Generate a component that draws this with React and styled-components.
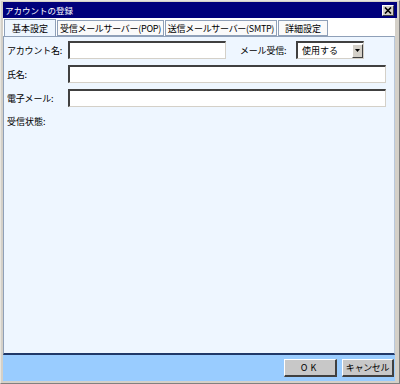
import React from 'react';
import styled, { createGlobalStyle } from 'styled-components';

const Global = createGlobalStyle`
  html, body {
    margin: 0;
    padding: 0;
    background: #d4d0c8;
  }
  * {
    box-sizing: border-box;
  }
`;

const Window = styled.div`
  width: 400px;
  height: 384px;
  display: flex;
  flex-direction: column;
  background: #d4d0c8;
  border-top: 1px solid #e8e6e0;
  border-left: 1px solid #e8e6e0;
  border-right: 1px solid #808080;
  border-bottom: 1px solid #808080;
  padding: 1px 4px 2px 2px;
  font-family: "Noto Sans CJK JP", "Liberation Sans", sans-serif;
  font-size: 9px;
  color: #000;
  white-space: nowrap;
`;

const TitleBar = styled.div`
  height: 16px;
  flex-shrink: 0;
  display: flex;
  align-items: center;
  justify-content: space-between;
  background: #00007b;
  color: #fff;
  padding: 0 3px 0 2px;
  margin-right: -2px;
  font-size: 8.5px;
`;

const CloseButton = styled.div`
  width: 12px;
  height: 11px;
  background: #d4d0c8;
  border-top: 1px solid #fff;
  border-left: 1px solid #fff;
  border-right: 1px solid #404040;
  border-bottom: 1px solid #404040;
  display: flex;
  align-items: center;
  justify-content: center;
`;

const Body = styled.div`
  flex: 1;
  display: flex;
  flex-direction: column;
  background: #fff;
  padding-top: 1px;
`;

const Tabs = styled.div`
  display: flex;
  align-items: flex-end;
  height: 17px;
  padding-left: 1px;
  background: #fff;
`;

const Tab = styled.div`
  width: ${({ w }) => w}px;
  height: ${({ active }) => (active ? '17px' : '16px')};
  margin-right: 1px;
  display: flex;
  align-items: center;
  justify-content: center;
  background: ${({ active }) => (active ? '#eef6ff' : '#fafafa')};
  border: 1px solid #8fa0b8;
  border-bottom: ${({ active }) => (active ? 'none' : '1px solid #8fa0b8')};
  font-size: 9px;
  letter-spacing: ${({ tight }) => (tight ? '-0.3px' : '0')};
`;

const Panel = styled.div`
  flex: 1;
  background: #eef6ff;
  border-left: 1px solid #8fa0b8;
  border-right: 1px solid #b8c8dc;
  border-bottom: 2px solid #203868;
  border-top: 1px solid #8fa0b8;
  padding: 4px 8px 0 3px;
  display: flex;
  flex-direction: column;
  gap: 6px;
`;

const Row = styled.div`
  display: flex;
  align-items: center;
  height: 18px;
`;

const Label = styled.div`
  width: ${({ w }) => w || 61}px;
  flex-shrink: 0;
  padding-left: ${({ pad }) => pad || 0}px;
  letter-spacing: -0.2px;
`;

const Input = styled.div`
  width: ${({ w }) => (w ? `${w}px` : 'auto')};
  flex: ${({ w }) => (w ? 'none' : '1')};
  height: 18px;
  background: #fff;
  border-top: 2px solid #404040;
  border-left: 2px solid #404040;
  border-right: 1px solid #d4d0c8;
  border-bottom: 1px solid #d4d0c8;
`;

const Select = styled.div`
  width: 68px;
  height: 18px;
  background: #fff;
  border-top: 2px solid #404040;
  border-left: 2px solid #404040;
  border-right: 1px solid #d4d0c8;
  border-bottom: 1px solid #d4d0c8;
  display: flex;
  align-items: center;
  justify-content: space-between;
  padding-left: 4px;
`;

const DropButton = styled.div`
  width: 11px;
  height: 14px;
  background: #d4d0c8;
  border-top: 1px solid #fff;
  border-left: 1px solid #fff;
  border-right: 1px solid #404040;
  border-bottom: 1px solid #404040;
  display: flex;
  align-items: center;
  justify-content: center;
`;

const StatusLabel = styled.div`
  margin-top: 2px;
`;

const Footer = styled.div`
  height: 26px;
  flex-shrink: 0;
  background: #99ccff;
  display: flex;
  align-items: center;
  justify-content: flex-end;
  gap: 5px;
  padding-right: 1px;
`;

const Button = styled.div`
  width: ${({ w }) => w}px;
  height: 18px;
  background: #c8c8c8;
  border-top: 1px solid #fff;
  border-left: 1px solid #fff;
  border-right: 2px solid #404040;
  border-bottom: 2px solid #404040;
  display: flex;
  align-items: center;
  justify-content: center;
  letter-spacing: ${({ spaced }) => (spaced ? '3px' : '-0.3px')};
`;

const App = () => (
  <>
    <Global />
    <Window>
      <TitleBar>
        <span>アカウントの登録</span>
        <CloseButton>
          <svg width="8" height="7" viewBox="0 0 8 7">
            <path d="M1 0.5 L7 6.5 M7 0.5 L1 6.5" stroke="#000" strokeWidth="1.6" />
          </svg>
        </CloseButton>
      </TitleBar>
      <Body>
        <Tabs>
          <Tab w={52} active>基本設定</Tab>
          <Tab w={107} tight>受信メールサーバー(POP)</Tab>
          <Tab w={112} tight>送信メールサーバー(SMTP)</Tab>
          <Tab w={50}>詳細設定</Tab>
        </Tabs>
        <Panel>
          <Row>
            <Label>アカウント名:</Label>
            <Input w={158} />
            <Label w={70} pad={14}>メール受信:</Label>
            <Select>
              使用する
              <DropButton>
                <svg width="5" height="3" viewBox="0 0 5 3">
                  <path d="M0 0 H5 L2.5 3 Z" fill="#000" />
                </svg>
              </DropButton>
            </Select>
          </Row>
          <Row>
            <Label>氏名:</Label>
            <Input />
          </Row>
          <Row>
            <Label>電子メール:</Label>
            <Input />
          </Row>
          <StatusLabel>受信状態:</StatusLabel>
        </Panel>
        <Footer>
          <Button w={53} spaced>OK</Button>
          <Button w={52}>キャンセル</Button>
        </Footer>
      </Body>
    </Window>
  </>
);

export default App;
